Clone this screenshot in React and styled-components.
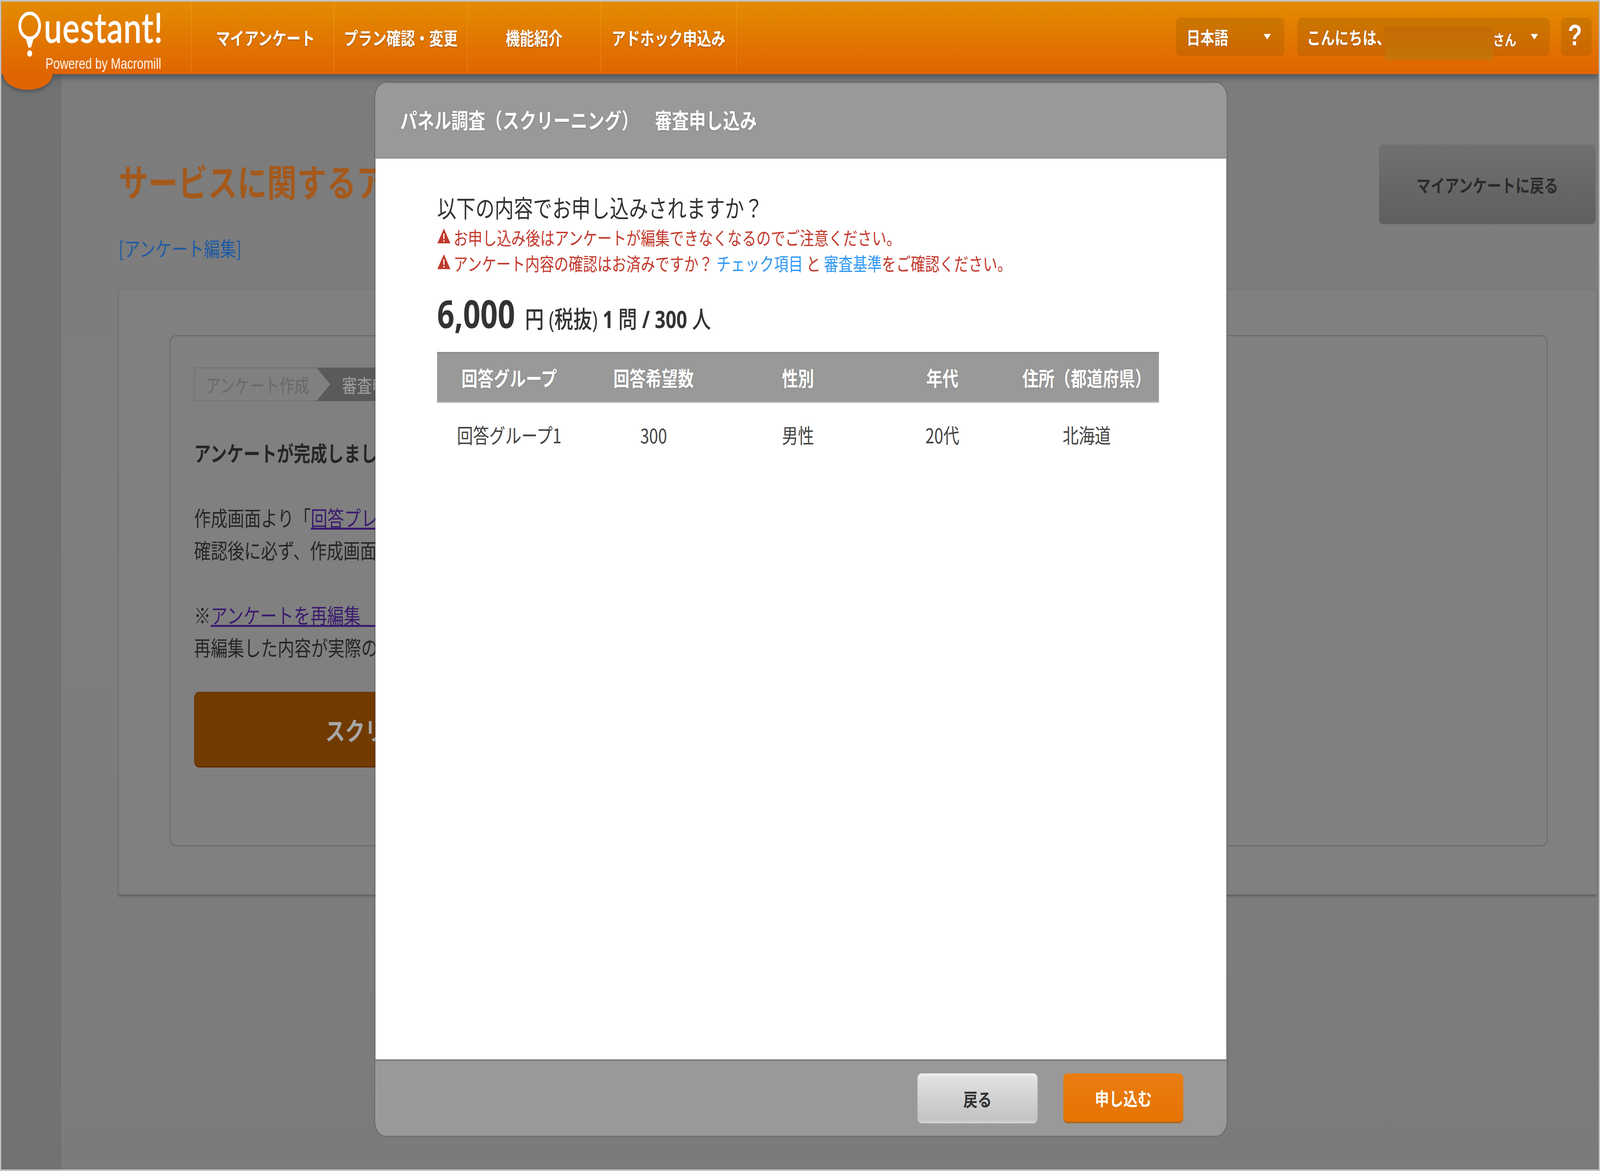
import React from 'react'
import styled, { createGlobalStyle } from 'styled-components'

const DESIGN_W = 5169
const DESIGN_H = 2998

const GlobalStyle = createGlobalStyle`
  html, body {
    margin: 0;
    padding: 0;
    background: #7c7c7c;
  }
  body {
    font-family: "Noto Sans CJK JP", "Noto Sans", sans-serif;
    overflow: hidden;
  }
  * {
    box-sizing: border-box;
  }
`

const Stage = styled.div`
  width: 100vw;
  height: 100vh;
  overflow: hidden;
`

const Frame = styled.div`
  position: relative;
  display: flex;
  flex-direction: column;
  width: ${DESIGN_W}px;
  height: ${DESIGN_H}px;
  border: 4px solid #c4c4c4;
  background: #7c7c7c;
  overflow: hidden;
  transform-origin: 0 0;
`

// header
const TopBar = styled.header`
  position: relative;
  z-index: 1;
  display: flex;
  align-items: stretch;
  flex: 0 0 186px;
  padding-right: 23px;
  background: linear-gradient(#e38c02, #e06400);
  box-shadow: 0 8px 18px rgba(58, 68, 78, 0.75);
`

const Logo = styled.div`
  position: relative;
  flex: 0 0 613px;
  padding: 26px 0 0 50px;
  color: #fff;

  &::after {
    content: '';
    position: absolute;
    left: 6px;
    bottom: -40px;
    width: 160px;
    height: 41px;
    border-radius: 0 0 80px 80px / 0 0 41px 41px;
    background: #e06400;
    box-shadow: 0 6px 10px rgba(58, 68, 78, 0.6);
  }
`

const BrandRow = styled.div`
  display: flex;
  align-items: flex-start;
  height: 110px;
`

const BrandName = styled.span`
  margin: -21px 0 0 4px;
  font-family: Lato, sans-serif;
  font-size: 104px;
  line-height: 120px;
  letter-spacing: 2px;
  font-weight: 400;
  -webkit-text-stroke: 2px #fff;
`

const PoweredBy = styled.div`
  margin: 1px 0 0 93px;
  font-family: "Liberation Sans", sans-serif;
  font-size: 38px;
  line-height: 44px;
  white-space: nowrap;
  opacity: 0.92;
`

const Nav = styled.nav`
  display: flex;
`

const NavItem = styled.a`
  display: flex;
  align-items: center;
  justify-content: center;
  width: ${p => p.$w}px;
  padding-left: ${p => p.$nudge || 0}px;
  padding-bottom: 4px;
  border-left: 2px solid rgba(255, 190, 90, 0.28);
  color: #fff;
  font-size: 46px;
  font-weight: 700;
  white-space: nowrap;
  text-shadow: 0 2px 4px rgba(120, 60, 0, 0.6);

  &:last-child {
    border-right: 2px solid rgba(255, 190, 90, 0.28);
  }
`

const TopRight = styled.div`
  display: flex;
  align-items: center;
  margin-left: auto;
  padding-bottom: 6px;
`

const Pill = styled.div`
  display: flex;
  align-items: center;
  width: ${p => p.$w}px;
  height: 98px;
  margin-left: ${p => p.$gap || 0}px;
  padding-left: ${p => p.$pad}px;
  border-radius: 14px;
  background: rgba(120, 70, 0, 0.2);
  color: #fff;
  font-size: 45px;
  font-weight: 700;
  white-space: nowrap;
  text-shadow: 0 1px 3px rgba(110, 60, 0, 0.6);
`

const Caret = styled.i`
  width: 0;
  height: 0;
  margin-left: ${p => p.$gap}px;
  border-left: 12px solid transparent;
  border-right: 12px solid transparent;
  border-top: 14px solid #fff;
`

const Redact = styled.span`
  flex: 0 0 349px;
  height: 84px;
  margin: 34px 0 0 -18px;
  background: linear-gradient(#c56a05, #c47508);
`

const Honorific = styled.span`
  font-size: 38px;
  margin-top: 10px;
`

const HelpMark = styled.span`
  font-family: "Liberation Sans", sans-serif;
  font-size: 76px;
  line-height: 1;
  font-weight: 700;
  margin-top: -8px;
`

// page behind the dialog
const Body = styled.div`
  display: flex;
  flex: 1;
  min-height: 0;
`

const SideStrip = styled.div`
  flex: 0 0 193px;
  background: #727272;
  border-right: 2px solid #6d6d6d;
`

const Main = styled.main`
  flex: 1;
  min-width: 0;
  padding: 0 7px 0 186px;
  background: linear-gradient(#7c7c7c, #7e7e7e 40%, #7b7b7b);
`

const PageHead = styled.div`
  display: flex;
  justify-content: space-between;
  height: 550px;
`

const Title = styled.h1`
  margin: 214px 0 0;
  color: #a4591c;
  font-size: 96px;
  line-height: 116px;
  font-weight: 700;
  white-space: nowrap;
`

const EditLink = styled.a`
  display: block;
  margin-top: 84px;
  color: #1e5aa3;
  font-size: 52px;
  line-height: 62px;
  white-space: nowrap;
`

const BackToList = styled.a`
  display: flex;
  align-items: center;
  justify-content: center;
  width: 700px;
  height: 204px;
  margin: 180px 3px 0 0;
  border-radius: 12px;
  background: linear-gradient(#707070, #5f5f5f);
  color: #2b2b2b;
  font-size: 46px;
  font-weight: 700;
`

const Panel = styled.section`
  height: 1550px;
  padding: 116px 158px 0 163px;
  background: #808080;
  border-top: 2px solid #747474;
  border-left: 2px solid #757575;
  box-shadow: 0 5px 5px rgba(80, 80, 80, 0.6);
`

const Card = styled.div`
  height: 1309px;
  padding: 80px 0 0 76px;
  border: 3px solid #6c6c6c;
  border-radius: 20px;
  overflow: hidden;
`

const Steps = styled.div`
  display: flex;
  height: 86px;
`

const Step = styled.div`
  display: flex;
  align-items: center;
  flex: ${p => (p.$active ? '0 0 800px' : '0 0 395px')};
  padding-left: ${p => (p.$active ? 83 : 36)}px;
  font-size: 48px;
  white-space: nowrap;
  color: ${p => (p.$active ? '#9c9c9c' : '#696969')};
  background: ${p => (p.$active ? '#5a5a5a' : 'transparent')};
  border: ${p => (p.$active ? 'none' : '2px solid #707070')};
  border-right: none;
  clip-path: ${p => (p.$active ? 'polygon(0 0, 100% 0, 100% 100%, 0 100%, 45px 50%)' : 'none')};
`

const Copy = styled.div`
  margin-top: 90px;
  color: #262626;
  font-size: 54px;
  line-height: 83px;
  white-space: nowrap;
`

const CopyBlock = styled.p`
  margin: 0 0 83px;
  font-weight: ${p => (p.$strong ? 700 : 400)};
`

const VisitedLink = styled.a`
  color: #3b1a6e;
  text-decoration: underline;
`

const StartButton = styled.div`
  display: flex;
  align-items: center;
  justify-content: center;
  width: 1744px;
  height: 194px;
  margin-top: -10px;
  border-radius: 16px;
  background: #703a00;
  border-bottom: 3px solid #5e2c00;
  color: #a8a8a8;
  font-size: 64px;
  font-weight: 700;
`

// dialog
const Dialog = styled.div`
  position: absolute;
  z-index: 2;
  left: 1209px;
  top: 208px;
  display: flex;
  flex-direction: column;
  width: 2749px;
  height: 2696px;
  border-radius: 36px;
  overflow: hidden;
  background: #fff;
  box-shadow: 0 0 5px rgba(50, 50, 50, 0.7);
`

const DialogHead = styled.div`
  display: flex;
  align-items: center;
  flex: 0 0 194px;
  padding: 0 0 6px 80px;
  background: #999;
  border-bottom: 3px solid #8b8b8b;
  color: #fff;
  font-size: 55px;
  font-weight: 700;
  white-space: pre;
  text-shadow: 0 1px 3px rgba(70, 70, 70, 0.6);
`

const DialogBody = styled.div`
  flex: 1;
  padding: 86px 220px 0 199px;
`

const Lead = styled.p`
  margin: 0 0 5px;
  color: #333;
  font-size: 62px;
  line-height: 76px;
  white-space: nowrap;
`

const Warning = styled.p`
  display: flex;
  align-items: center;
  margin: 0;
  height: 66px;
  color: #c43a2e;
  font-size: 46.7px;
  white-space: pre;
`

const WarnIcon = styled.svg`
  flex: 0 0 44px;
  width: 44px;
  height: 40px;
  margin: -4px 9px 0 0;
`

const InlineLink = styled.a`
  color: #2f98f5;
`

const PriceRow = styled.div`
  display: flex;
  align-items: baseline;
  height: 166px;
  margin-top: 30px;
  color: #333;
  font-family: "Open Sans", "Noto Sans CJK JP", sans-serif;
  white-space: pre;
`

const PriceValue = styled.span`
  margin-right: 32px;
  font-size: 98px;
  font-weight: 700;
`

const PriceNote = styled.span`
  font-size: 61px;
  font-weight: 500;
`

const PriceNum = styled.span`
  font-weight: 700;
`

const GroupGrid = styled.div`
  width: 2332px;
`

const GroupRow = styled.div`
  display: grid;
  grid-template-columns: repeat(5, 1fr);
  align-items: center;
  text-align: center;
  white-space: nowrap;
  font-size: 52px;
  height: ${p => (p.$head ? 130 : 162)}px;
  color: ${p => (p.$head ? '#fff' : '#444')};
  font-weight: ${p => (p.$head ? 700 : 400)};
  background: ${p => (p.$head ? '#999' : 'transparent')};
  border-top: ${p => (p.$head ? '4px solid #8c8c8c' : 'none')};
  border-bottom: ${p => (p.$head ? '4px solid #aaa' : 'none')};
  text-shadow: ${p => (p.$head ? '0 1px 3px rgba(90, 90, 90, 0.5)' : 'none')};
`

const DialogFoot = styled.div`
  display: flex;
  align-items: center;
  justify-content: flex-end;
  gap: 83px;
  flex: 0 0 196px;
  padding: 0 139px 0 0;
  background: #999;
  border-top: 4px solid #7d7d7d;
`

const FootButton = styled.button`
  width: 388px;
  height: 128px;
  padding: 0;
  border: none;
  border-radius: 14px;
  font-family: inherit;
  font-size: 46px;
  font-weight: 700;
  color: ${p => (p.$primary ? '#fff' : '#333')};
  background: ${p => (p.$primary ? 'linear-gradient(#ea7d12, #e57300)' : 'linear-gradient(#ececec 4%, #e0e0e0 10%, #c3c3c3 92%, #d5d5d5)')};
  border-bottom: ${p => (p.$primary ? '4px solid #a9682a' : 'none')};
`

const navItems = [
  ['マイアンケート', 461, 18],
  ['プラン確認・変更', 431, 0],
  ['機能紹介', 431, 0],
  ['アドホック申込み', 440, 0],
]

const groupColumns = ['回答グループ', '回答希望数', '性別', '年代', '住所（都道府県）']
const groupRows = [['回答グループ1', '300', '男性', '20代', '北海道']]

function AlertTriangle() {
  return (
    <WarnIcon viewBox="0 0 44 40">
      <path d="M22 1 L43 39 L1 39 Z" fill="#c0392b" />
      <rect x="20" y="14" width="4" height="14" fill="#fff" />
      <rect x="20" y="31" width="4" height="4" fill="#fff" />
    </WarnIcon>
  )
}

function LogoMark() {
  return (
    <svg width="84" height="124" viewBox="0 0 84 124" style={{ flex: '0 0 84px' }}>
      <circle cx="42" cy="36" r="32" fill="none" stroke="#fff" strokeWidth="9" />
      <path d="M28 66 L56 66 L46 92 L38 92 Z" fill="#fff" />
      <circle cx="42" cy="107" r="8" fill="#fff" />
    </svg>
  )
}

export default function App() {
  // the design is 5169x2998, fit it to whatever window we actually get
  const fit = `scale(${window.innerWidth / DESIGN_W}, ${window.innerHeight / DESIGN_H})`

  return (
    <Stage>
      <GlobalStyle />
      <Frame style={{ transform: fit }}>
        <TopBar>
          <Logo>
            <BrandRow>
              <LogoMark />
              <BrandName>uestant!</BrandName>
            </BrandRow>
            <PoweredBy>Powered by Macromill</PoweredBy>
          </Logo>
          <Nav>
            {navItems.map(([label, w, nudge]) => (
              <NavItem key={label} $w={w} $nudge={nudge}>{label}</NavItem>
            ))}
          </Nav>
          <TopRight>
            <Pill $w={350} $pad={34}>
              日本語
              <Caret $gap={114} />
            </Pill>
            <Pill $w={816} $pad={31} $gap={42}>
              こんにちは、
              <Redact />
              <Honorific>さん</Honorific>
              <Caret $gap={46} />
            </Pill>
            <Pill $w={99} $pad={22} $gap={36}>
              <HelpMark>?</HelpMark>
            </Pill>
          </TopRight>
        </TopBar>

        <Body>
          <SideStrip />
          <Main>
            <PageHead>
              <div>
                <Title>サービスに関するア</Title>
                <EditLink>[アンケート編集]</EditLink>
              </div>
              <BackToList>マイアンケートに戻る</BackToList>
            </PageHead>
            <Panel>
              <Card>
                <Steps>
                  <Step>アンケート作成</Step>
                  <Step $active>審査申し込み</Step>
                </Steps>
                <Copy>
                  <CopyBlock $strong>アンケートが完成しました。</CopyBlock>
                  <CopyBlock>
                    作成画面より「<VisitedLink>回答プレビュー</VisitedLink>」をご確認ください。
                    <br />
                    確認後に必ず、作成画面を閉じてください。
                  </CopyBlock>
                  <CopyBlock>
                    ※<VisitedLink>アンケートを再編集　する</VisitedLink>
                    <br />
                    再編集した内容が実際の画面に反映されます。
                  </CopyBlock>
                </Copy>
                <StartButton>スクリーニング審査に申し込む</StartButton>
              </Card>
            </Panel>
          </Main>
        </Body>

        <Dialog>
          <DialogHead>{'パネル調査（スクリーニング）　  審査申し込み'}</DialogHead>
          <DialogBody>
            <Lead>以下の内容でお申し込みされますか？</Lead>
            <Warning>
              <AlertTriangle />
              お申し込み後はアンケートが編集できなくなるのでご注意ください。
            </Warning>
            <Warning>
              <AlertTriangle />
              アンケート内容の確認はお済みですか？ <InlineLink>チェック項目</InlineLink> と <InlineLink>審査基準</InlineLink>をご確認ください。
            </Warning>
            <PriceRow>
              <PriceValue>6,000</PriceValue>
              <PriceNote>
                円 (税抜) <PriceNum>1</PriceNum> 問 <PriceNum>/ 300</PriceNum> 人
              </PriceNote>
            </PriceRow>
            <GroupGrid>
              <GroupRow $head>
                {groupColumns.map(c => <span key={c}>{c}</span>)}
              </GroupRow>
              {groupRows.map(r => (
                <GroupRow key={r[0]}>
                  {r.map(v => <span key={v}>{v}</span>)}
                </GroupRow>
              ))}
            </GroupGrid>
          </DialogBody>
          <DialogFoot>
            <FootButton>戻る</FootButton>
            <FootButton $primary>申し込む</FootButton>
          </DialogFoot>
        </Dialog>
      </Frame>
    </Stage>
  )
}
